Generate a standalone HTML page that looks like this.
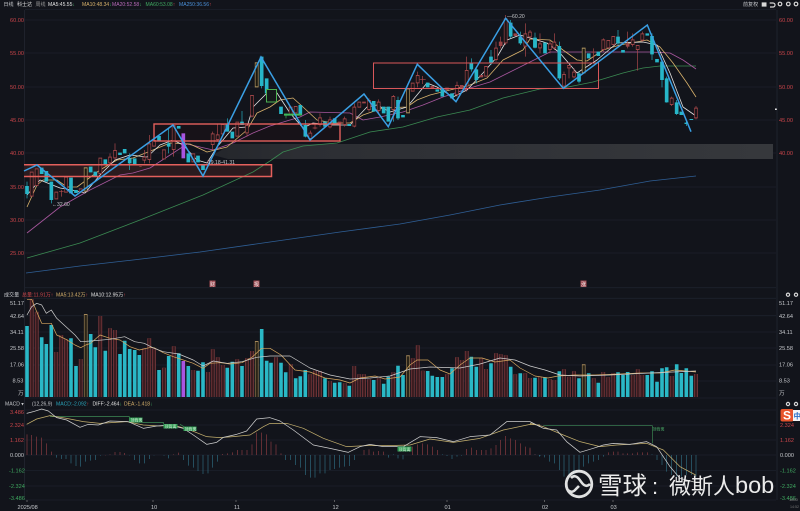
<!DOCTYPE html>
<html><head><meta charset="utf-8"><style>
html,body{margin:0;padding:0;background:#12141b;width:800px;height:511px;overflow:hidden}
svg{display:block;filter:blur(.35px)}
text{font-family:"Liberation Sans","Noto Sans CJK SC",sans-serif;font-size:5.6px;fill:#c6c8cc}
.h text{font-size:5.05px}
.r{fill:#c9454a}.g{fill:#3fa860}.y{fill:#d8b26c}.p{fill:#b76ab8}.b{fill:#4a90d9}.w{fill:#e4e4e4}.c{fill:#2aa6bd}
.m{fill:none;stroke-width:.8;stroke-linejoin:round}
.lab{fill:#d8f0dc;font-size:4px}
</style></head><body>
<svg width="800" height="511" viewBox="0 0 800 511" xmlns="http://www.w3.org/2000/svg">
<defs>
<linearGradient id="bd" x1="0" x2="1" y1="0" y2="0"><stop offset="0" stop-color="#24262b"/><stop offset=".15" stop-color="#2c2e33"/><stop offset="1" stop-color="#36383c"/></linearGradient>
</defs>
<rect width="800" height="511" fill="#12141b"/>
<!-- grid -->
<path stroke="#1d212c" stroke-width=".8" fill="none" d="M25 9.5H776M25 20H776M25 53H776M25 87H776M25 120H776M25 153H776M25 187H776M25 220H776M25 253H776M25 287.7H776M25 298.3H776M25 315.7H776M25 332H776M25 348H776M25 365H776M25 381H776M25 398H776M25 410H776M25 425H776M25 440H776M25 455H776M25 470.5H776M25 486H776M25 500H776"/>
<path stroke="#232731" stroke-width=".8" fill="none" d="M24.5 10V500M777 10V500"/>
<!-- gray band -->
<polygon points="213,155 232,144 773,144 773,159 228,159" fill="url(#bd)"/>
<!-- box fills -->
<rect x="24" y="164.5" width="247.5" height="12" fill="#2b1b1f"/>
<rect x="154" y="124" width="186" height="17" fill="#171218"/>
<!-- moving averages -->
<polyline class="m" stroke="#2f5f96" points="26,273 80,266 133,260 200,252 270,242 340,232 400,224 450,215 500,205 550,197 600,190 650,181 696,176"/>
<polyline class="m" stroke="#3b8a52" points="27,258 80,243 140,220 203,195 253,172 270,161 283,152 303,146 337,143 370,132 403,127 437,117 470,110 503,98 540,89 563,88 593,82 623,73 643,68 660,66 696,66"/>
<polyline class="m" stroke="#a8579e" points="27,233 60,207 90,190 120,175 133,173 150,168 167,157 187,144 213,150 233,143 253,133 270,126 300,117 310,112 350,113 363,120 380,117 403,112 423,105 443,97 470,88 490,82 510,72 530,62 550,52 580,52 623,52 650,52 670,53 683,60 696,69"/>
<polyline class="m" stroke="#d8b26c" points="27,207 37,185 43,180 57,180 67,187 77,187 100,170 117,160 133,158 153,150 170,143 190,144 207,152 227,147 247,130 257,113 270,107 280,100 293,98 303,107 317,120 333,123 350,123 363,115 383,108 407,107 417,100 430,95 450,90 470,85 487,78 503,60 523,50 530,39 550,40 563,50 577,60 587,61 603,50 620,45 647,40 660,47 673,63 687,83 696,97"/>
<polyline class="m" stroke="#e2e2e2" points="27,195 40,180 60,188 72,190 85,193 100,175 115,160 130,155 147,157 160,145 173,140 183,145 197,160 207,163 217,147 233,128 247,127 253,107 270,90 277,93 290,113 303,128 313,123 330,125 350,125 367,107 377,105 390,112 407,107 417,95 427,83 437,87 453,97 467,90 483,73 497,57 507,40 520,35 530,38 547,43 560,53 577,73 597,60 617,43 643,42 657,45 670,73 683,107 696,116"/>
<!-- candles pane 1 -->
<g transform="scale(.33333)" fill="none">
<path stroke="#27b6c8" stroke-width="2" d="M81 545V595M154 545V610M389 460V510M506 385V460M682 355V395M726 333V375M785 170V265"/>
<path stroke="#b24a4d" stroke-width="2" d="M184 570V590M177 575H191M330 460V495M345 430V480M433 450V490M448 405V490M521 375V470M624 480V495M638 395V450M653 372V425M741 375V410M756 285V352M418 500H425"/>
<path stroke="#27b6c8" stroke-width="11" d="M81 558V582M125 503V522M139 513V545M154 545V600M213 533V580M228 570V579M272 500V517M286 515V528M316 478V492M360 458V465M374 447V460M389 475V490M404 475V495M477 408V423M506 430V440M536 378V386M565 460V487M594 467V487M609 495V510M682 372V395M697 395V415M726 365V375M785 170V258M800 235V280"/>
<path stroke="#9c4447" stroke-width="11" d="M95 515V590M110 505V558M169 575V598M198 530V578M242 565V578M301 473V522M330 470V490M345 450V475M433 470V482M448 430V480M462 420V440M492 448V478M521 375V450M580 460V487M638 400V435M653 403V420M668 372V403M712 365V410M741 375V400M756 285V350"/>
<path stroke="#1b1418" stroke-width="7" d="M95 518V587M110 508V555M169 578V595M198 533V575M242 568V575M301 476V519M330 473V487M345 453V472M433 473V479M448 433V477M462 423V437M492 451V475M521 378V447M580 463V484M638 403V432M653 406V417M668 375V400M712 368V407M741 378V397M756 288V347"/>
<path stroke="#b59a63" stroke-width="11" d="M257 502V575M770 187V262"/>
<path stroke="#1b1810" stroke-width="7" d="M257 505V572M770 190V259"/>
<path stroke="#a855e0" stroke-width="11" d="M550 400V475"/>
</g>
<!-- candles pane 2 -->
<g transform="translate(270,0) scale(.33333)" fill="none">
<path stroke="#27b6c8" stroke-width="2" d="M106 360V412M370 300V365M384 290V360M604 175V215M619 200V250M663 150V195M722 60V115M751 95V135"/>
<path stroke="#b24a4d" stroke-width="2" d="M121 392V420M135 370V388M128 384H142M150 340V380M180 350V385M224 350V380M253 310V382M297 295V335M326 298V338M370 285V360M443 215V262M458 228V252M449 238H467M561 245V290M590 170V275M678 125V185M692 110V145M707 45V135M766 70V170M780 90V118"/>
<path stroke="#27b6c8" stroke-width="11" d="M33 320V342M91 315V345M106 375V410M165 365V380M194 355V370M238 372V378M311 303V335M341 320V340M355 320V365M384 300V355M399 345V352M473 248V262M502 268V275M517 268V290M546 280V295M604 188V208M619 208V240M663 170V188M722 68V110M751 110V130M795 115V143"/>
<path stroke="#9c4447" stroke-width="11" d="M62 320V345M77 318V340M121 398V417M150 352V375M180 358V382M209 365V372M224 355V375M253 320V380M268 305V323M282 305V310M297 300V330M326 305V333M370 288V330M428 248V275M443 225V250M487 258V265M531 263V270M561 255V285M575 255V265M590 210V260M634 225V232M648 198V230M678 143V180M692 125V138M707 55V130M736 100V108M766 100V140M780 95V112"/>
<path stroke="#1b1418" stroke-width="7" d="M62 323V342M77 321V337M121 401V414M150 355V372M180 361V379M224 358V372M253 323V377M268 308V320M297 303V327M326 308V330M370 291V327M428 251V272M443 228V247M561 258V282M590 213V257M648 201V227M678 146V177M707 58V127M766 103V137M780 98V109"/>
<path stroke="#b59a63" stroke-width="11" d="M414 265V340"/>
<path stroke="#1b1810" stroke-width="7" d="M414 268V337"/>
<path stroke="#3fb85a" stroke-width="6" d="M42 344H95"/>
<path stroke="#3fb85a" stroke-width="2" d="M48 340V355"/>
</g>
<rect x="266.5" y="89.5" width="10" height="12.5" fill="#14181a" stroke="#4caf50" stroke-width="1"/>
<!-- candles pane 3 -->
<g transform="translate(530,0) scale(.33333)" fill="none">
<path stroke="#27b6c8" stroke-width="2" d="M15 98V145M88 125V240M147 215V250M264 90V135M366 100V180M396 180V262M410 230V308M440 300V345M469 360V378"/>
<path stroke="#b24a4d" stroke-width="2" d="M30 100V160M60 120V160M73 100V150M102 215V262M117 195V235M132 205V235M191 145V185M220 115V155M293 95V145M308 100V140M323 135V212M337 95V125M425 290V318M498 318V358"/>
<path stroke="#27b6c8" stroke-width="11" d="M15 113V143M45 128V160M88 138V235M147 220V245M176 160V175M205 155V168M264 110V130M279 150V158M352 100V107M366 108V163M381 177V187M396 185V240M410 235V307M440 307V342M454 335V345M469 368V372M484 357V360"/>
<path stroke="#9c4447" stroke-width="11" d="M30 130V145M60 130V150M73 125V145M102 222V260M117 195V205M132 215V232M191 155V158M220 118V150M235 120V145M250 108V135M293 130V140M308 118V135M323 135V150M337 100V122M425 293V315M498 323V355"/>
<path stroke="#1b1418" stroke-width="7" d="M30 133V142M60 133V147M73 128V142M102 225V257M117 198V202M132 218V229M220 121V147M235 123V142M250 111V132M308 121V132M323 138V147M337 103V119M425 296V312M498 326V352"/>
<path stroke="#b59a63" stroke-width="11" d="M161 143V220"/>
<path stroke="#1b1810" stroke-width="7" d="M161 146V217"/>
</g>
<!-- box strokes -->
<path fill="none" stroke="#e4605c" stroke-width="1.5" d="M24 164.8H271.5V176.5H24"/>
<rect x="154" y="124" width="186" height="17" fill="none" stroke="#e4605c" stroke-width="1.4"/>
<rect x="373.5" y="63" width="225" height="25.5" fill="none" stroke="#d9575a" stroke-width="1"/>
<!-- zigzag -->
<polyline fill="none" stroke="#3a9fe4" stroke-width="1.5" stroke-linejoin="miter" points="24,171 37,165 75,196 173,125 203,176 261,57 310,140 364,94 388.3,126.7 417.3,64.3 456,101.7 505.7,18.3 563.3,88.3 647.3,25 691,131.7"/>
<!-- volume -->
<defs>
<path id="vr" d="M31.7 299.3V397M36.7 311.7V397M56.3 352V397M61.3 335V397M66 339.3V397M80.7 359V397M100.3 316V397M110 328.3V397M115 330V397M144.3 348.3V397M149.3 338.3V397M154 348.3V397M164 367.7V397M173.7 346.3V397M193.3 370V397M208 372V397M212.7 349.3V397M217.7 357.3V397M222.7 365V397M237.3 359.3V397M247 358.3V397M252 351V397M276 357.3V397M290.7 364V397M310.3 374.3V397M315 370.7V397M320 371V397M330 381V397M344.7 383.3V397M354.3 366V397M359.3 374.3V397M364 374.3V397M369 379.3V397M378.7 378.3V397M393.3 372.3V397M412.7 358.3V397M417.7 345.3V397M422.7 370.7V397M447 374.3V397M457 357.3V397M461.7 360V397M466.7 351V397M481.3 358.3V397M486 369V397M496 353.3V397M500.7 354.3V397M505.7 355.3V397M515.3 374.3V397M525.3 373.3V397M530 378V397M540 376.7V397M550 379.3V397M554.3 380V397M564 369.3V397M569 376.7V397M574 371.3V397M593.7 378.3V397M603.3 372V397M608.3 377.3V397M613.3 373.3V397M632.7 375V397M637.7 369.3V397M642.3 375V397M671.7 376V397M696 374V397"/>
</defs>
<use href="#vr" fill="none" stroke="#8f4245" stroke-width="3.7"/>
<use href="#vr" fill="none" stroke="#3a1c20" stroke-width="2.5"/>
<path fill="none" stroke="#2ab8c6" stroke-width="3.6" d="M27 326V397M41.7 337.3V397M46.3 344V397M51.3 325V397M71 338.3V397M76 366V397M90.7 334V397M95.3 347.3V397M105.3 350.7V397M120 354V397M124.7 340.7V397M129.7 349V397M134.7 350V397M139.3 355V397M159 370V397M168.7 356V397M178.7 353.3V397M188.3 366V397M198 370.7V397M203 362.3V397M227.3 367.7V397M232.3 361.7V397M242 366V397M261.7 329V397M266.7 360.7V397M271 362.7V397M281 362.7V397M285.7 372.3V397M295.7 378.3V397M300.3 376.3V397M305.3 370V397M325 378.3V397M334.7 382.7V397M339.7 382.3V397M349.3 385.7V397M373.7 380V397M383.7 383.7V397M388.3 376.7V397M398 365.7V397M403 375V397M427.7 371V397M432.3 375.7V397M437.3 377V397M442.3 377V397M452 368.3V397M471.3 356.7V397M476.3 366.7V397M491 363.3V397M510.7 366.7V397M520.3 373.3V397M535 377.7V397M545 377.3V397M559.3 371.3V397M579 378.3V397M588.7 373.3V397M598.3 382.7V397M618 372.3V397M623 375V397M627.7 372V397M647.3 375V397M652 371.3V397M657 381.7V397M662 368.3V397M666.7 367.3V397M676.7 364.3V397M681.3 373V397M686.3 368.3V397M691.3 375.7V397"/>
<path fill="none" stroke="#a3875a" stroke-width="3.6" d="M85.7 314V397M256.7 341V397M408 355.3V397M583.7 364.3V397"/>
<path fill="none" stroke="#2a2418" stroke-width="2.4" d="M85.7 315V397M256.7 342V397M408 356.3V397M583.7 365.3V397"/>
<path fill="none" stroke="#a855e0" stroke-width="3.6" d="M183.3 361V397"/>
<!-- volume MAs -->
<polyline class="m" stroke="#d8a860" style="stroke-width:.7" points="27,299.3 31.7,299.3 36.7,311.7 41.7,323.3 51.3,323.3 56.7,335 66,339.3 75,345 80.7,347.7 85.7,345 90.7,343.3 100,335 110,338.3 120,340 130,346.7 139.3,350 149.3,347.7 154,347.7 163.3,352.7 173.3,356.7 183.3,360 193.3,363.3 203,368.3 210,363.3 220,362.7 230,364 242,362.7 252,357.3 261.7,348.3 270,348.3 281,355 295,370 310,372 325,378 340,380 350,383 360,378 375,376 385,379 400,377 410,365 417,360 428,360 440,370 450,374 460,365 470,358 482,358 495,362 510,360 520,368 535,376 548,378 558,376 575,375 595,375 620,374 640,373 660,373 675,370 696,372"/>
<polyline class="m" stroke="#cfcfcf" style="stroke-width:.7" points="27,315 31.7,306.7 36.7,303.3 41.7,305 46.3,313.3 51.3,310 56.7,318.3 66,326.7 75,335 80.7,341.7 90.7,341 110,339.3 124.7,336.7 134.7,341.7 144.3,343.3 154,348.3 163.3,351.7 178.7,354 193.3,360 203,366 213.3,361 227.3,363.3 242,361.7 256.7,357.3 270,356 290,356 310,368 330,375 350,379 370,378 390,376 410,369 430,367 460,368 480,364 500,358 515,360 530,366 545,370 560,375 580,376 610,375 650,373 696,371"/>
<!-- MACD hist -->
<g transform="translate(0,395) scale(.33333)" fill="none" stroke-width="2">
<path stroke="#8a3c42" d="M81 118V180M95 120V180M110 125V180M125 128V180M139 145V180M154 170V180M316 181V180M330 178V180M345 171V180M360 171V180M374 174V180M521 178V180M536 173V180M668 177V180M682 175V180M697 172V180M712 165V180M726 165V180M741 165V180M756 148V180M770 113V180M785 113V180M800 118V180"/>
<path stroke="#2f6c80" d="M169 180V188M184 180V192M198 180V192M213 180V205M228 180V213M242 180V215M257 180V200M272 180V197M286 180V195M301 180V182M389 180V181M404 180V195M418 180V205M433 180V205M448 180V192M462 180V181M492 180V182M506 180V190M550 180V195M565 180V212M580 180V218M594 180V228M609 180V237M624 180V235M638 180V218M653 180V200"/>
</g>
<g transform="translate(270,395) scale(.33333)" fill="none" stroke-width="2">
<path stroke="#8a3c42" d="M3 140V180M18 148V180M33 175V180M282 165V180M297 163V180M311 170V180M326 168V180M341 170V180M428 155V180M443 148V180M458 145V180M473 148V180M487 155V180M502 165V180M590 162V180M604 158V180M619 165V180M634 165V180M648 165V180M663 160V180M678 150V180M692 135V180M707 123V180M722 130V180M736 135V180M751 145V180M766 155V180M780 158V180"/>
<path stroke="#2f6c80" d="M47 180V195M62 180V195M77 180V210M91 180V218M106 180V240M121 180V248M135 180V248M150 180V235M165 180V235M180 180V225M194 180V222M209 180V218M224 180V215M238 180V213M253 180V195M355 180V188M370 180V178M384 180V190M399 180V193M517 180V178M531 180V183M546 180V192M561 180V185M575 180V182M795 180V178M810 180V183"/>
</g>
<g transform="translate(530,395) scale(.33333)" fill="none" stroke-width="2">
<path stroke="#8a3c42" d="M0 160V180M15 178V180M235 172V180M250 170V180M264 170V180M279 175V180M293 175V180M308 175V180M323 172V180M337 172V180M352 172V180"/>
<path stroke="#2f6c80" d="M28 180V185M43 180V187M58 180V200M73 180V205M88 180V225M102 180V245M117 180V240M132 180V238M147 180V230M161 180V215M176 180V205M191 180V200M205 180V195M220 180V185M366 180V178M381 180V195M396 180V210M410 180V230M425 180V240M440 180V245M454 180V245M469 180V240M484 180V240M498 180V245"/>
</g>
<!-- MACD lines and guides -->
<g transform="translate(0,395) scale(.33333)" fill="none" stroke-linejoin="round">
<path stroke="#3d8a54" stroke-width="2.2" d="M150 65H388V82H490V87M540 88L555 97"/>
<polyline stroke="#c5b06e" stroke-width="2.2" points="80,88 110,72 150,62 200,70 250,80 300,85 380,80 430,90 480,93 520,90 570,105 620,125 660,128 700,125 750,120 790,95 810,85"/>
<polyline stroke="#cfcfcf" stroke-width="2.2" points="80,55 100,50 125,42 145,48 170,68 200,75 240,97 265,88 295,90 330,78 385,80 430,100 470,93 510,90 550,100 580,120 620,148 650,142 670,127 710,118 740,108 770,72 810,68"/>
</g>
<g transform="translate(270,395) scale(.33333)" fill="none" stroke-linejoin="round">
<polyline stroke="#c5b06e" stroke-width="2.2" points="0,85 50,85 100,100 160,130 230,155 290,152 350,152 420,150 480,132 550,142 630,130 700,105 780,88 810,90"/>
<polyline stroke="#cfcfcf" stroke-width="2.2" points="0,68 30,78 70,105 130,150 180,160 235,172 270,155 300,148 340,155 400,155 450,125 500,128 550,140 600,125 660,120 710,80 780,80 810,95"/>
</g>
<g transform="translate(530,395) scale(.33333)" fill="none" stroke-linejoin="round">
<path stroke="#3d8a54" stroke-width="2" d="M40 92H367V145"/>
<polyline stroke="#c5b06e" stroke-width="2.2" points="0,85 40,95 100,120 150,140 210,155 260,150 350,145 400,165 450,215 497,240"/>
<polyline stroke="#cfcfcf" stroke-width="2.2" points="0,80 40,100 80,105 110,140 150,172 190,160 220,150 250,145 300,148 350,140 380,155 420,215 450,250 497,262"/>
</g>
<!-- green labels -->
<rect x="129.5" y="417.5" width="13" height="4.5" fill="#2f9a52"/><text class="lab" x="130.5" y="421.5" style="font-size:4px">顶背离</text>
<rect x="163.5" y="424" width="14" height="4.5" fill="#2f9a52"/><text class="lab" x="164.5" y="428" style="font-size:4px">顶背离</text>
<rect x="183.5" y="426.5" width="13" height="4.5" fill="#2f9a52"/><text class="lab" x="184.5" y="430.5" style="font-size:4px">顶背离</text>
<rect x="397.5" y="446.5" width="14" height="5" fill="#2f9a52"/><text class="lab" x="398.5" y="451" style="font-size:4px">顶背离</text>
<text x="652.5" y="430.5" style="font-size:4px;fill:#4caf6a">顶背离</text>
<!-- red marks -->
<rect x="209.5" y="280.5" width="6" height="6.5" fill="#a04a52"/><text x="210" y="286" style="font-size:5px;fill:#eee">财</text>
<rect x="253.5" y="280.5" width="6" height="6.5" fill="#a04a52"/><text x="254" y="286" style="font-size:5px;fill:#eee">报</text>
<rect x="580.5" y="280.5" width="6" height="6.5" fill="#a04a52"/><text x="581" y="286" style="font-size:5px;fill:#eee">涨</text>
<!-- header -->
<g class="h">
<text x="3.5" y="6">日线</text><text x="17" y="6" class="w">科士达</text><text x="35.5" y="6" style="fill:#999">周线</text>
<text x="48" y="6" class="w">MA5:45.55<tspan class="g">↓</tspan></text>
<text x="82" y="6" class="y">MA10:48.34<tspan class="g">↓</tspan></text>
<text x="112" y="6" class="p">MA20:52.58<tspan class="g">↓</tspan></text>
<text x="145.5" y="6" class="g">MA60:53.08<tspan class="r">↑</tspan></text>
<text x="179" y="6" class="b">MA250:36.56<tspan class="r">↑</tspan></text>
<text x="743" y="6">前复权</text>
</g>
<g fill="none" stroke="#d8d8d8" stroke-width="1.2">
<rect x="762.3" y="3" width="3.6" height="3" fill="#d8d8d8"/>
<path d="M769.7 3H773a2 2 0 0 1 0 4H770"/>
<circle cx="780" cy="4" r="1.8"/><circle cx="788.3" cy="4" r="1.8"/><circle cx="796" cy="4" r="1.8"/>
<circle cx="788" cy="294.7" r="1.6"/><circle cx="796" cy="294.7" r="1.6"/>
<circle cx="788" cy="404" r="1.6"/><circle cx="796" cy="404" r="1.6"/>
</g>
<rect x="775" y="108.5" width="1.8" height="1.5" fill="#e6e6e6"/>
<!-- price labels -->
<text class="r" x="10" y="22">60.00</text><text class="r" x="10" y="55">55.00</text><text class="r" x="10" y="89">50.00</text><text class="r" x="10" y="122">45.00</text><text class="r" x="10" y="155">40.00</text><text class="r" x="10" y="189">35.00</text><text class="r" x="10" y="222">30.00</text><text class="r" x="10" y="255">25.00</text>
<text class="r" x="779" y="22">60.00</text><text class="r" x="779" y="55">55.00</text><text class="r" x="779" y="89">50.00</text><text class="r" x="779" y="122">45.00</text><text class="r" x="779" y="155">40.00</text>
<g class="h">
<text x="507" y="18">—60.20</text>
<text x="52" y="206">←32.60</text>
<text x="208" y="164">19.18-41.31</text>
<!-- volume header -->
<text x="4" y="296.5">成交量</text>
<text x="22" y="296.5" class="r">总量:11.91万↑</text>
<text x="56" y="296.5" class="y">MA5:13.42万<tspan class="r">↑</tspan></text>
<text x="91" y="296.5" class="w">MA10:12.95万<tspan class="r">↑</tspan></text>
<!-- macd header -->
<text x="5" y="405.5">MACD ▾</text>
<text x="32" y="405.5">(12,26,9)</text>
<text x="56" y="405.5" class="c">MACD:-2.092<tspan class="r">↑</tspan></text>
<text x="92.5" y="405.5" class="w">DIFF:-2.464<tspan class="g">↓</tspan></text>
<text x="124" y="405.5" class="y">DEA:-1.418<tspan class="g">↓</tspan></text>
</g>
<text x="10" y="304.8">51.17</text><text x="10" y="318">42.64</text><text x="10" y="334">34.11</text><text x="10" y="350">25.58</text><text x="10" y="366.5">17.06</text><text x="12.5" y="382.5">8.53</text><text x="18" y="395">万</text>
<text x="779" y="304.8">51.17</text><text x="779" y="318">42.64</text><text x="779" y="334">34.11</text><text x="779" y="350">25.58</text><text x="779" y="366.5">17.06</text><text x="779" y="382.5">8.53</text><text x="779" y="395">万</text>
<text class="r" x="10" y="414">3.486</text><text class="r" x="10" y="427">2.324</text><text class="r" x="10" y="441.8">1.162</text><text x="10" y="457">0.000</text><text class="g" x="9" y="472.5">-1.162</text><text class="g" x="9" y="488">-2.324</text><text class="g" x="9" y="500">-3.486</text>
<text class="r" x="780" y="427">2.324</text><text class="r" x="780" y="441.8">1.162</text><text x="780" y="457">0.000</text><text class="g" x="780" y="472.5">-1.162</text><text class="g" x="780" y="488">-2.324</text><text class="g" x="780" y="500">-3.486</text>
<!-- time axis -->
<path stroke="#888" stroke-width=".6" d="M27 500v2M153 500v2M236 500v2M334.5 500v2M447 500v2M544.7 500v2M613 500v2"/>
<text x="17.5" y="509">2025/08</text><text x="151" y="509">10</text><text x="234" y="509">11</text><text x="332.5" y="509">12</text><text x="444.5" y="509">01</text><text x="542" y="509">02</text><text x="610.5" y="509">03</text>
<text x="789" y="501" style="font-size:4px;fill:#888">1800</text><text x="790" y="508" style="font-size:3.6px;fill:#777">14:52</text>
<!-- sohu logo -->
<rect x="780.5" y="409" width="13" height="12.5" rx="2" fill="#e8552c"/>
<text x="783" y="419.5" style="font-size:12px;font-weight:bold;fill:#fff">S</text>
<rect x="793" y="410" width="7" height="11" fill="#f4f4f4"/>
<text x="793.5" y="418.5" style="font-size:7.5px;font-weight:bold;fill:#2a6fc4">中</text>
<!-- watermark -->
<g fill="none" stroke="#ececec" stroke-width="2.8" opacity=".95">
<circle cx="579" cy="484" r="12.8"/>
<path d="M571 478q4-4 8 1l3 4q4 5 8 1" stroke-width="2.6"/>
<path d="M568 490q4 4 8-1l3-3" stroke-width="2.6"/>
</g>
<text x="598" y="494" style="font-size:24.5px;fill:#ebebeb">雪球</text>
<text x="652" y="494" style="font-size:22px;fill:#ebebeb">:</text>
<text x="669" y="494" style="font-size:22px;fill:#ebebeb">微斯人</text>
<text x="735" y="493" style="font-size:23.5px;fill:#ebebeb">bob</text>
</svg>
</body></html>
